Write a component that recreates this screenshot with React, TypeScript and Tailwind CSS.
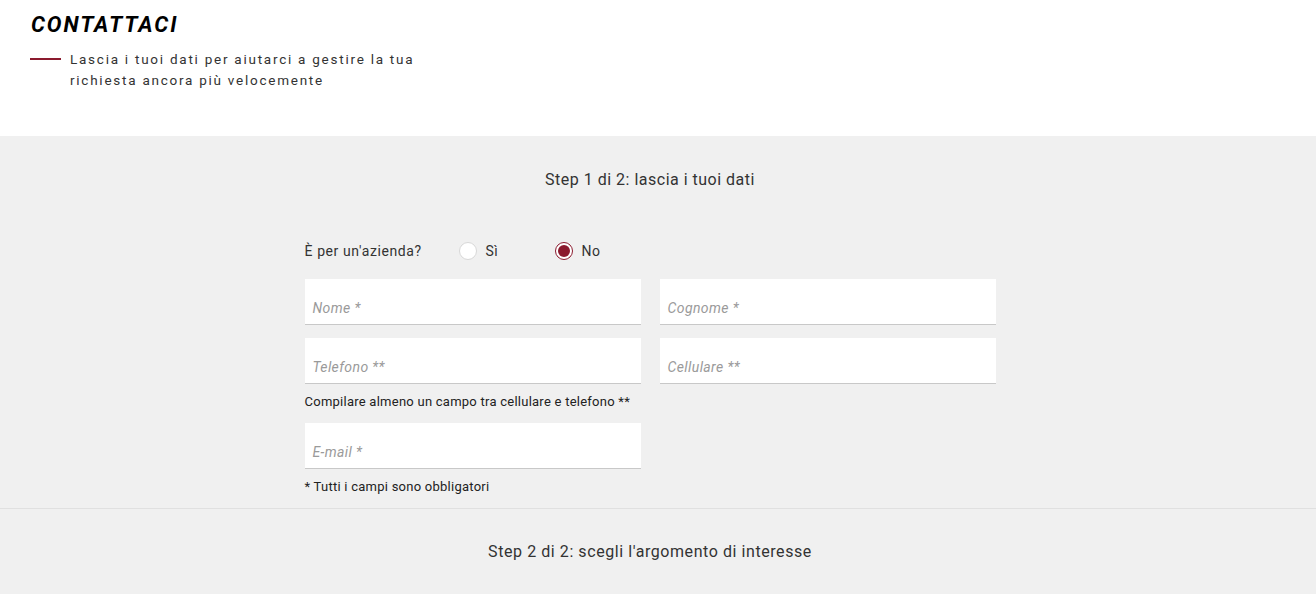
import React from "react";

const font = { fontFamily: "Roboto, 'Noto Sans', sans-serif" };

function Field({ placeholder }: { placeholder: string }) {
  return (
    <div className="h-[46px] w-[336px] bg-white border-b border-[#c8c8c8] flex items-end pb-[9px] pl-[8px]">
      <span className="italic text-[14px] tracking-[0.4px] text-[#9a9a9a] leading-none">{placeholder}</span>
    </div>
  );
}

function Radio({ checked, label }: { checked?: boolean; label: string }) {
  return (
    <div className="flex items-center gap-[9px]">
      <span
        className={
          checked
            ? "w-[18px] h-[18px] rounded-full border border-[#8b1a2e] bg-white flex items-center justify-center"
            : "w-[18px] h-[18px] rounded-full border border-[#d8d8d8] bg-white"
        }
      >
        {checked && <span className="w-[12px] h-[12px] rounded-full bg-[#8b1a2e]" />}
      </span>
      <span className="text-[14px] tracking-[0.5px] text-[#333]">{label}</span>
    </div>
  );
}

export default function App() {
  return (
    <div className="w-[1316px] h-[594px] overflow-hidden bg-[#f0f0f0] text-[#333]" style={font}>
      <div className="bg-white h-[136px] pt-[12px] pl-[31px]">
        <h1 className="text-[22px] font-bold italic tracking-[1.9px] text-black leading-[26px]">CONTATTACI</h1>
        <div className="flex mt-[11px]">
          <span className="w-[31px] h-[2px] bg-[#8b1a2e] mt-[9px] -ml-[1px]" />
          <p className="ml-[9px] w-[400px] text-[13.5px] tracking-[1.75px] leading-[21px] text-[#333]">
            Lascia i tuoi dati per aiutarci a gestire la tua richiesta ancora più velocemente
          </p>
        </div>
      </div>
      <div className="w-[1300px]">
        <p className="text-center text-[16px] pt-[34px] leading-[20px] tracking-[0.5px] text-[#333]">Step 1 di 2: lascia i tuoi dati</p>
        <div className="w-[691px] mx-auto mt-[51px]">
          <div className="flex items-center h-[20px]">
            <span className="text-[14px] tracking-[0.6px] w-[154px]">È per un'azienda?</span>
            <div className="w-[96px]">
              <Radio label="Sì" />
            </div>
            <Radio checked label="No" />
          </div>
          <div className="flex gap-[19px] mt-[18px]">
            <Field placeholder="Nome *" />
            <Field placeholder="Cognome *" />
          </div>
          <div className="flex gap-[19px] mt-[13px]">
            <Field placeholder="Telefono **" />
            <Field placeholder="Cellulare **" />
          </div>
          <p className="text-[13px] tracking-[0.25px] mt-[10px] leading-[16px] text-[#222]">Compilare almeno un campo tra cellulare e telefono **</p>
          <div className="mt-[13px]">
            <Field placeholder="E-mail *" />
          </div>
          <p className="text-[13px] tracking-[0.25px] mt-[10px] leading-[16px] text-[#222]">* Tutti i campi sono obbligatori</p>
        </div>
      </div>
      <div className="border-t border-[#e0e0e0] mt-[13px] w-[1316px]">
        <div className="w-[1300px]">
          <p className="text-center text-[16px] pt-[33px] leading-[20px] tracking-[0.57px]">Step 2 di 2: scegli l'argomento di interesse</p>
        </div>
      </div>
    </div>
  );
}
